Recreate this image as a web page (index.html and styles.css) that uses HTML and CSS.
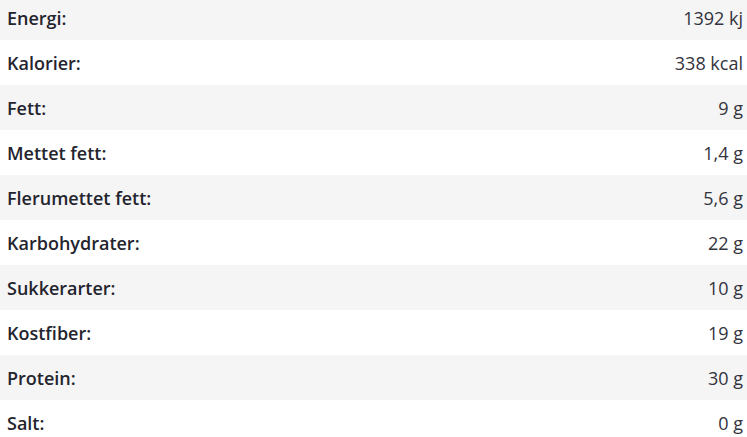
FILE: index.html
```html
<!DOCTYPE html>
<html lang="no">

<head>
    <meta charset="UTF-8">
    <title>Næringsinnhold</title>
    <link rel="stylesheet" href="styles.css">
</head>

<body>
    <table class="nutrition">
        <tr><th>Energi:</th><td>1392 kj</td></tr>
        <tr><th>Kalorier:</th><td>338 kcal</td></tr>
        <tr><th>Fett:</th><td>9 g</td></tr>
        <tr><th>Mettet fett:</th><td>1,4 g</td></tr>
        <tr><th>Flerumettet fett:</th><td>5,6 g</td></tr>
        <tr><th>Karbohydrater:</th><td>22 g</td></tr>
        <tr><th>Sukkerarter:</th><td>10 g</td></tr>
        <tr><th>Kostfiber:</th><td>19 g</td></tr>
        <tr><th>Protein:</th><td>30 g</td></tr>
        <tr><th>Salt:</th><td>0 g</td></tr>
    </table>
</body>

</html>
```

FILE: styles.css
```css
body {
    margin: 0;
    font-family: 'Open Sans', 'Noto Sans', sans-serif;
    color: #24242e;
    background: #fff;
}

.nutrition {
    width: 100%;
    border-collapse: collapse;
    margin-top: -5px;
    font-size: 18px;
}

.nutrition tr {
    height: 45px;
}

.nutrition tr:nth-child(odd) {
    background-color: #f5f5f5;
}

.nutrition th {
    text-align: left;
    font-weight: 600;
    padding: 0 7px;
}

.nutrition td {
    text-align: right;
    padding: 0 4px;
    color: #33333d;
}
```
